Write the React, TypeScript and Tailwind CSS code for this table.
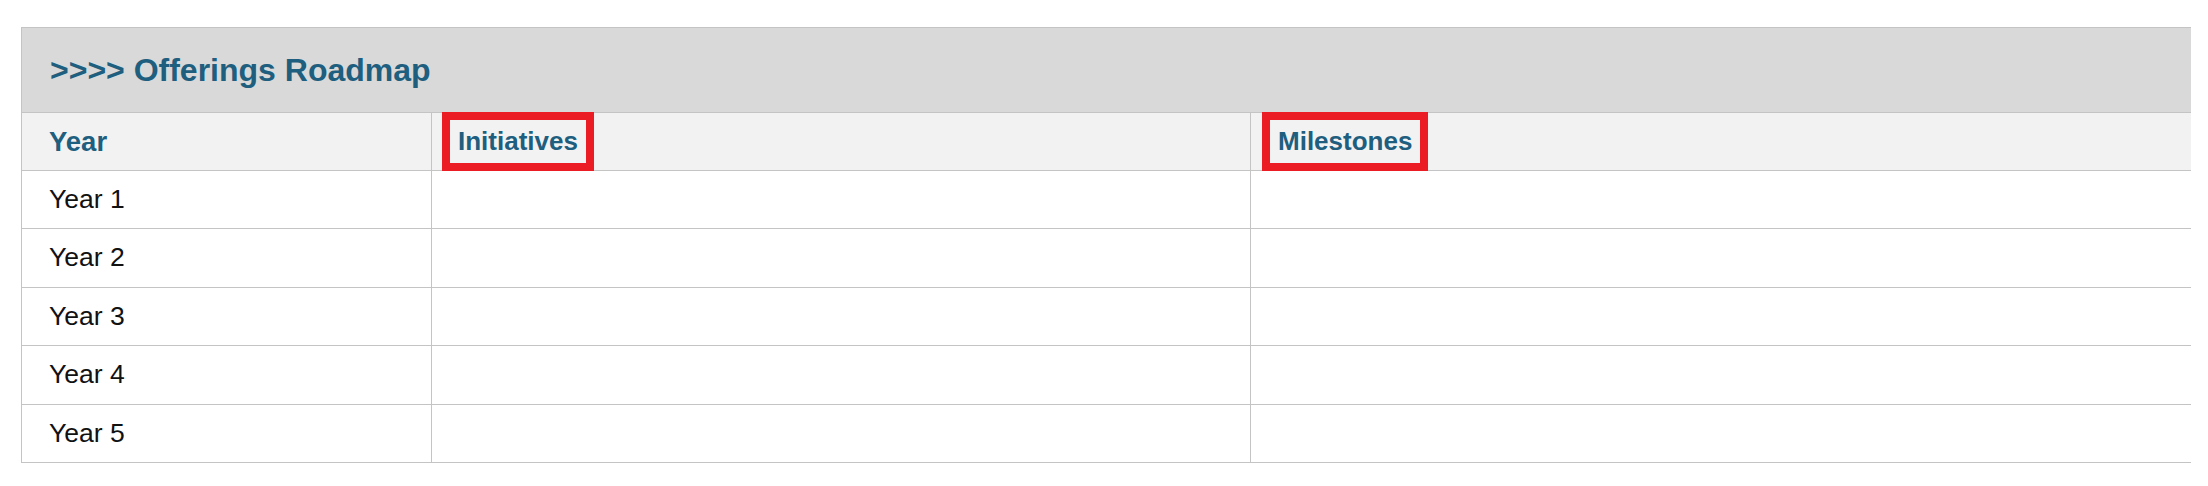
const years = ["Year 1", "Year 2", "Year 3", "Year 4", "Year 5"];
const rowHeights = ["h-[58px]", "h-[59px]", "h-[58px]", "h-[59px]", "h-[58px]"];

function Marked({ children }: { children: React.ReactNode }) {
  return (
    <span className="relative inline-block leading-[39px]">
      {children}
      {/* red annotation box */}
      <span className="pointer-events-none absolute -left-[16px] -right-[16px] -top-[10px] -bottom-[10px] border-[8px] border-[#ec1c24]" />
    </span>
  );
}

export default function App() {
  return (
    <div className="min-h-screen bg-white pt-[27px] font-['Liberation_Sans',Arial,sans-serif]">
      <div className="ml-[21px] w-[2170px] border-l border-[#c4c4c4]">
        {/* Title bar */}
        <div className="flex h-[86px] items-center border-y border-[#c4c4c4] bg-[#d9d9d9] pl-[28px]">
          <h1 className="text-[32px] font-bold text-[#1e5e7f]">&gt;&gt;&gt;&gt; Offerings Roadmap</h1>
        </div>

        {/* Header */}
        <div className="grid h-[58px] grid-cols-[410px_819px_1fr] border-b border-[#c4c4c4] bg-[#f2f2f2] text-[26px] font-bold text-[#1e5e7f]">
          <div className="flex items-center border-r border-[#c4c4c4] pl-[27px] text-[27.5px]">Year</div>
          <div className="flex items-center border-r border-[#c4c4c4] pl-[26px]">
            <Marked>Initiatives</Marked>
          </div>
          <div className="flex items-center pl-[27px]">
            <Marked>Milestones</Marked>
          </div>
        </div>

        {/* Rows */}
        {years.map((y, i) => (
          <div
            key={y}
            className={`grid grid-cols-[410px_819px_1fr] border-b border-[#c4c4c4] text-[26.5px] text-[#111111] ${rowHeights[i]}`}
          >
            <div className="flex items-center border-r border-[#c4c4c4] pl-[27px]">{y}</div>
            <div className="border-r border-[#c4c4c4]" />
            <div />
          </div>
        ))}
      </div>
    </div>
  );
}
